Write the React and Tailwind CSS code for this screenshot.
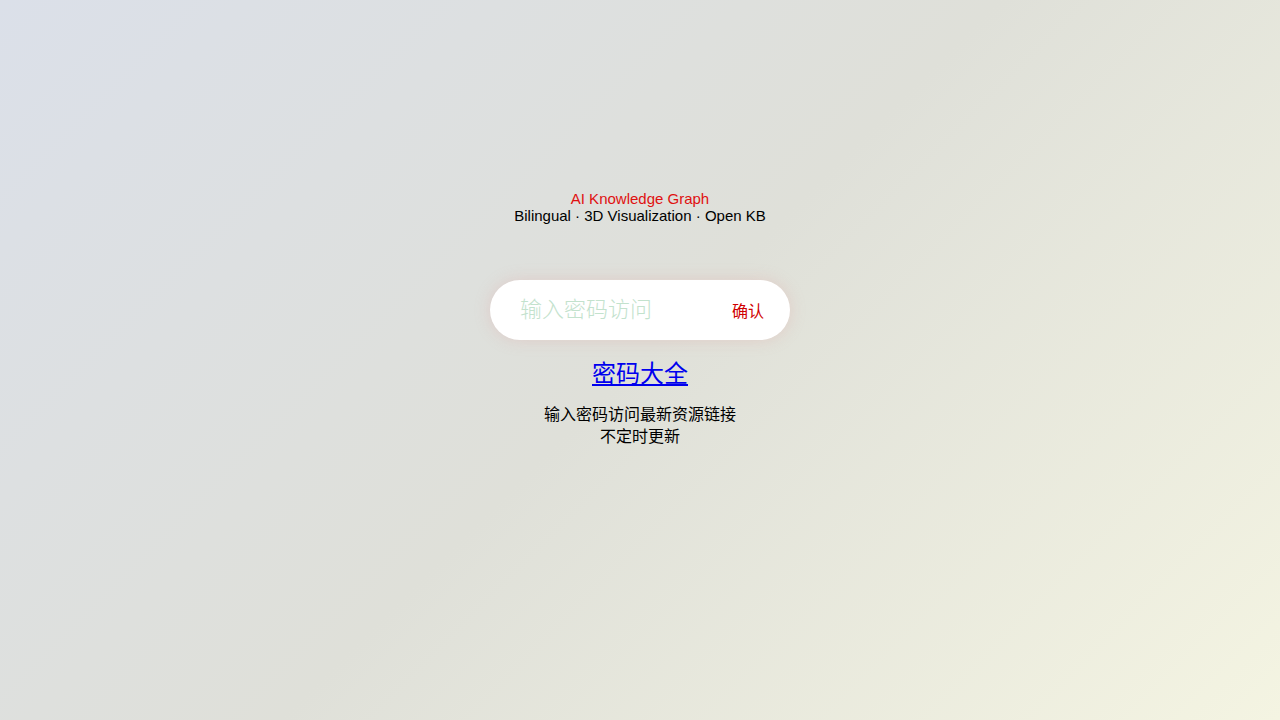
export default function App() {
  return (
    <div
      className="w-[1280px] h-[720px] flex flex-col items-center bg-[linear-gradient(135deg,#dbe0e9_0%,#dfe0d9_50%,#f4f4e2_100%)]"
      style={{ fontFamily: '"Liberation Sans", "Noto Sans CJK SC", sans-serif' }}
    >
      <div className="mt-[190px] flex flex-col items-center text-[15px] leading-[17px]">
        <div className="text-[#e01010]">AI Knowledge Graph</div>
        <div className="text-black">Bilingual · 3D Visualization · Open KB</div>
      </div>
      <div className="mt-[56px] w-[300px] h-[60px] rounded-full bg-white flex items-center justify-between pl-[30px] pr-[26px] shadow-[0_0_16px_rgba(225,150,150,0.28)]">
        <input
          placeholder="输入密码访问"
          className="w-[190px] h-[30px] leading-[30px] mb-[6px] bg-transparent outline-none text-[22px] font-light placeholder:text-[#c3e2cd] text-black"
          style={{ fontFamily: '"Noto Sans CJK SC", "Liberation Sans", sans-serif' }}
        />
        <span className="text-[#d00000] text-[16px] mt-[4px]">确认</span>
      </div>
      <a href="#" className="mt-[19px] text-[24px] leading-[30px] text-[#0000ee] underline">
        密码大全
      </a>
      <div className="mt-[15px] text-[16px] leading-[22px] text-black text-center">
        <div>输入密码访问最新资源链接</div>
        <div>不定时更新</div>
      </div>
    </div>
  );
}
